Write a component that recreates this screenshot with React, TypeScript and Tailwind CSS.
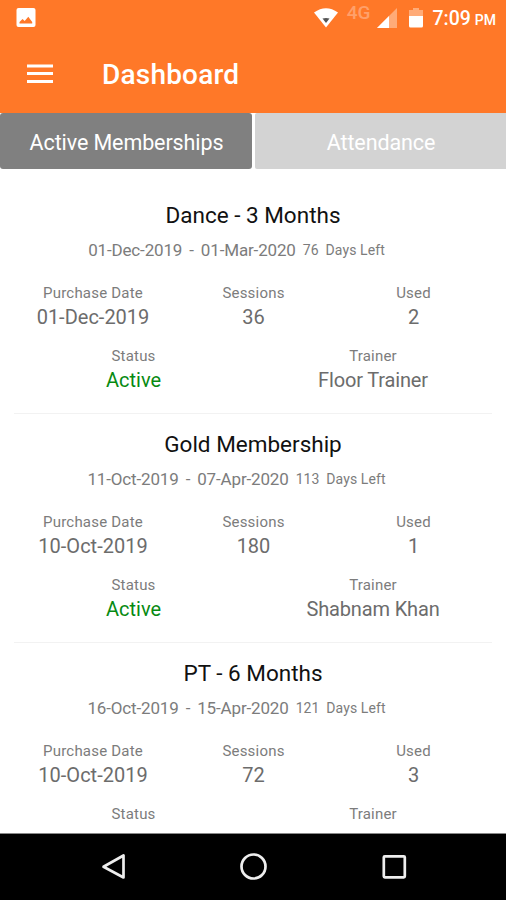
type Membership = {
  title: string; from: string; to: string; days: string;
  purchased: string; sessions: string; used: string; trainer: string;
};

const memberships: Membership[] = [
  { title: "Dance - 3 Months", from: "01-Dec-2019", to: "01-Mar-2020", days: "76", purchased: "01-Dec-2019", sessions: "36", used: "2", trainer: "Floor Trainer" },
  { title: "Gold Membership", from: "11-Oct-2019", to: "07-Apr-2020", days: "113", purchased: "10-Oct-2019", sessions: "180", used: "1", trainer: "Shabnam Khan" },
  { title: "PT - 6 Months", from: "16-Oct-2019", to: "15-Apr-2020", days: "121", purchased: "10-Oct-2019", sessions: "72", used: "3", trainer: "" },
];

function Field({ label, value, tone = "text-[#6c6c6c]" }: { label: string; value: string; tone?: string }) {
  return (
    <div className="flex flex-col items-center whitespace-nowrap">
      <span className="h-6 text-[15px] leading-6 tracking-[0.2px] text-[#7c7c7c]">{label}</span>
      <span className={`h-6 text-[20px] leading-6 ${tone}`}>{value}</span>
    </div>
  );
}

function Card({ m }: { m: Membership }) {
  return (
    <section className="mx-3.5 h-[229.3px] shrink-0 border-b border-[#f2f2f2] pt-4">
      <h2 className="h-7 text-center text-[22.5px] leading-7 text-[#111]">{m.title}</h2>
      <div className="mt-[10px] flex h-6 items-center justify-center whitespace-nowrap pr-[33px] text-[17px] tracking-[-0.15px] text-[#7c7c7c]">
        <span>{m.from}</span>
        <span className="mx-[7px]">-</span>
        <span>{m.to}</span>
        <span className="-mt-px ml-[7px] text-[14px] tracking-normal">{m.days}</span>
        <span className="-mt-px ml-[7px] text-[14px] tracking-[0.1px]">Days Left</span>
      </div>
      <div className="mt-[18px] grid grid-cols-[158px_163px_157px]">
        <Field label="Purchase Date" value={m.purchased} />
        <Field label="Sessions" value={m.sessions} />
        <Field label="Used" value={m.used} />
      </div>
      <div className="mt-[15px] grid grid-cols-[239px_240px]">
        <Field label="Status" value={m.trainer ? "Active" : ""} tone="text-[#078a12]" />
        <Field label="Trainer" value={m.trainer} tone="text-[#6c6c6c] tracking-[-0.15px]" />
      </div>
    </section>
  );
}

export default function App() {
  return (
    <div className="flex h-[900px] w-[506px] flex-col overflow-hidden bg-white font-[Roboto,sans-serif]">
      <header className="h-[113px] shrink-0 bg-[#ff7828] text-white">
        <div className="flex h-9 items-center pl-4 pr-[10px]">
          <svg width="20" height="20" viewBox="0 0 20 20">
            <rect x="0.5" y="0" width="19" height="19" rx="2" fill="#fff" />
            <path d="M3.5 15.5V14l3-3 2.2 2 3.6-4.3 3.9 5.3v1.5z" fill="#ff7828" />
          </svg>
          <svg className="ml-auto" width="26" height="20" viewBox="0 0 26 20">
            <path d="M1 4.500Q13-4 25 4.500L13 19.500z" fill="#fff" />
            <path d="M9.500 10.500Q13 9.300 16.500 10.500L13 15z" fill="#555" />
          </svg>
          <span className="-mt-[10px] ml-[8px] text-[19px] font-medium text-[#ffa06a]">4G</span>
          <svg className="ml-[7px]" width="20" height="20" viewBox="0 0 20 20">
            <path d="M0 20L20 0V20z" fill="#ffab78" />
            <path d="M0 20L12 8V20z" fill="#fff" />
          </svg>
          <svg className="ml-[12px]" width="14" height="20" viewBox="0 0 14 20">
            <path d="M0 2H4V0H10V2H14V9H0z" fill="#ffab78" />
            <path d="M0 8H14V18Q14 19.500 12.500 19.500H1.500Q0 19.500 0 18z" fill="#fff" />
          </svg>
          <span className="ml-[9px] mt-px text-[19.5px] font-medium">7:09</span>
          <span className="ml-1 mt-[4px] text-[14px] font-medium">PM</span>
        </div>
        <div className="flex h-[77px] items-center pl-[27px]">
          <svg className="-mt-[2px]" width="26" height="20" viewBox="0 0 26 20">
            <path d="M0 2H26M0 9.500H26M0 17.500H26" stroke="#fff" strokeWidth="3" />
          </svg>
          <h1 className="ml-[49px] text-[28px] font-medium tracking-[0.2px]">Dashboard</h1>
        </div>
      </header>
      <nav className="flex h-14 shrink-0 gap-[3px] text-[21.5px] tracking-[-0.1px] text-white">
        <button className="flex h-14 w-[252px] items-center justify-center rounded-[3px] bg-[#808080] pl-px pt-[4px]">Active Memberships</button>
        <button className="flex h-14 w-[251px] items-center justify-center rounded-l-[2px] bg-[#d3d3d3] pl-px pt-[4px]">Attendance</button>
      </nav>
      <main className="flex min-h-0 flex-1 flex-col overflow-hidden pt-[15.500px]">
        {memberships.map((m) => <Card key={m.title} m={m} />)}
      </main>
      <footer className="flex h-[67px] shrink-0 items-center justify-center border-t border-[#888] bg-black">
        <svg width="506" height="66" viewBox="0 0 506 66" fill="none" stroke="#eee" strokeWidth="2.700">
          <path d="M123.500 21.500V43.500L103.500 32.800z" strokeLinejoin="round" />
          <circle cx="253.500" cy="32.500" r="12" />
          <rect x="383.800" y="22.300" width="21" height="21" rx="1" />
        </svg>
      </footer>
    </div>
  );
}
